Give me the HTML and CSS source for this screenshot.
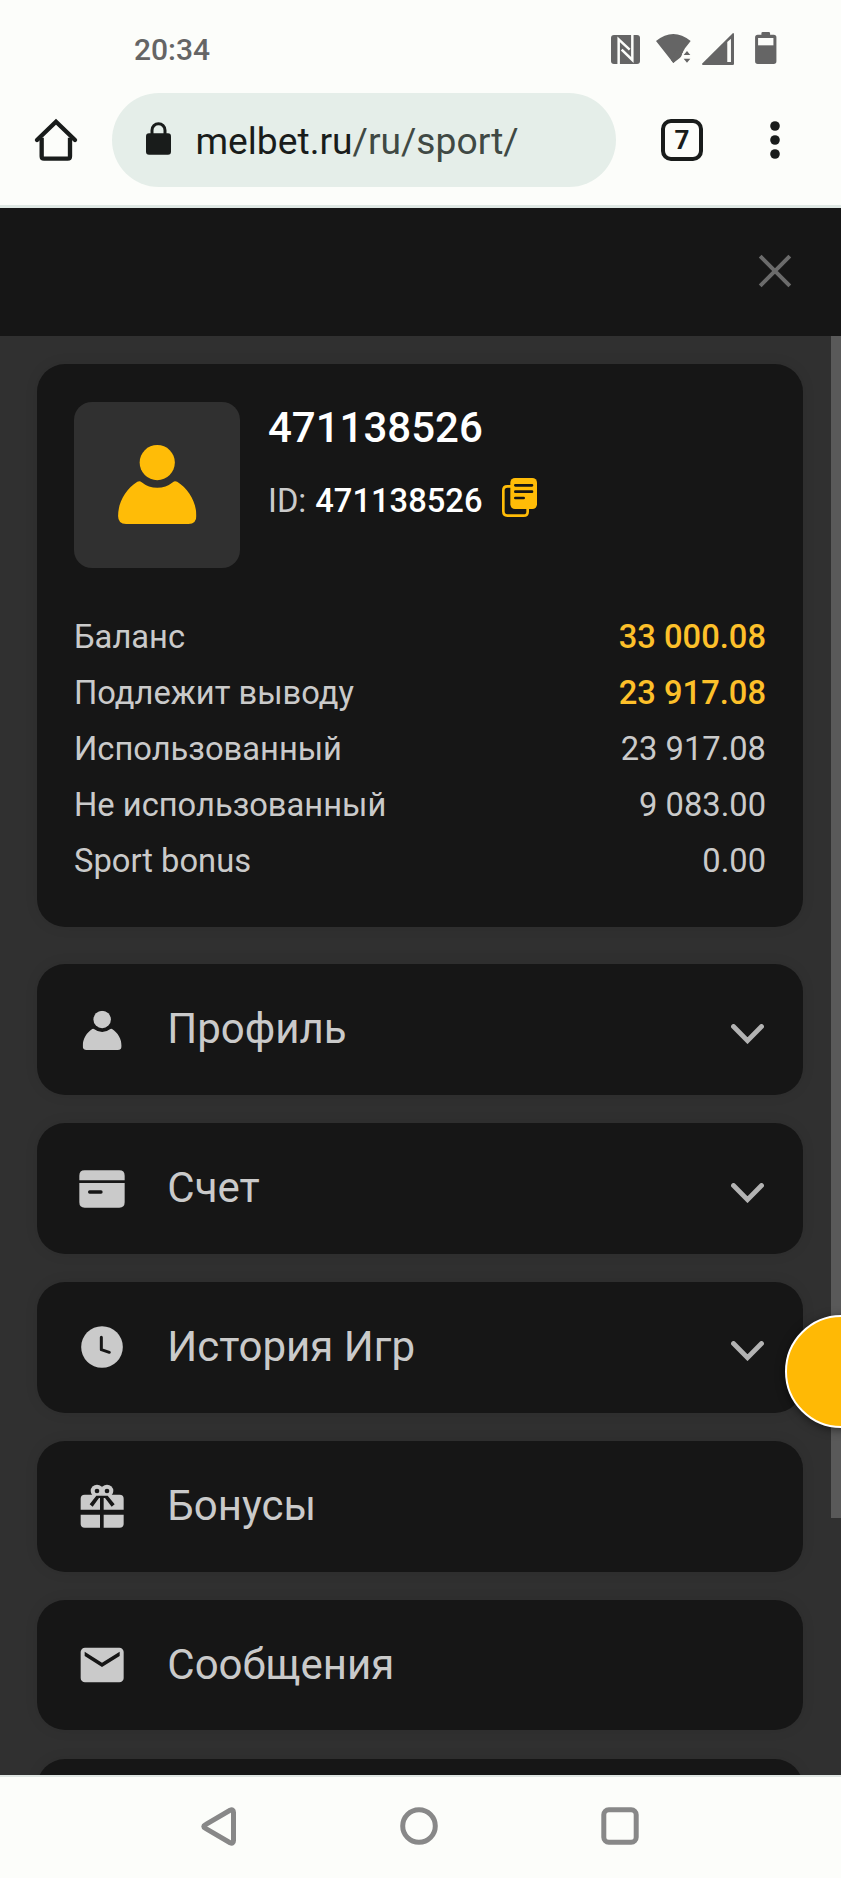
FILE: index.html
```html
<!DOCTYPE html>
<html lang="ru">
<head>
<meta charset="utf-8">
<title>melbet.ru</title>
<link rel="stylesheet" href="styles.css">
</head>
<body>
<svg class="defs" width="0" height="0">
  <symbol id="person" viewBox="0 0 236 238">
    <circle cx="118" cy="53" r="53"/>
    <path d="M58 111Q65 107 71 112Q92 129 118 129T165 112Q171 107 178 111C212 132 236 172 236 214Q236 238 212 238H24Q0 238 0 214C0 172 24 132 58 111Z"/>
  </symbol>
  <symbol id="chevron" viewBox="0 0 33 20">
    <path d="M2.5 2.5L16.5 16.7L30.5 2.5" fill="none" stroke="#b3b3b3" stroke-width="4.8" stroke-linecap="round"/>
  </symbol>
</svg>
<div class="screen">
  <div class="status">
    <span class="time">20:34</span>
    <div class="status-icons">
      <svg class="nfc" viewBox="0 0 87 87"><rect width="87" height="87" rx="9" fill="#656565"/><path d="M23 87V13L56 44M64 0V75L32 44" fill="none" stroke="#fcfdfa" stroke-width="7.5"/></svg>
      <svg class="wifi" viewBox="0 0 105 87"><path d="M0 21Q52 -21 104 21L87 43L79 57V66L52 87Z" fill="#656565"/><path d="M66 87L80 58L89 46L105 46V87Z" fill="#fcfdfa"/><path d="M52 87L80 55V50H60L45 78Z" fill="#656565"/><path d="M83 63L93 51L103 63ZM83 74L93 86L103 74Z" fill="#656565"/></svg>
      <svg class="signal" viewBox="0 0 95 95"><path d="M0 91L92 0Q95 0 95 4V91Q95 95 91 95H3Q0 95 0 91Z" fill="#656565"/><path d="M75 27L86 17V86H75Z" fill="#fcfdfa"/></svg>
      <svg class="battery" viewBox="0 0 64 96"><path d="M19 8V4Q19 0 23 0H41Q45 0 45 4V8H56Q64 8 64 16V88Q64 96 56 96H8Q0 96 0 88V16Q0 8 8 8Z" fill="#656565"/><rect x="9" y="18" width="46" height="22" fill="#fcfdfa"/></svg>
    </div>
  </div>
  <div class="toolbar">
    <svg class="home" viewBox="0 0 126 126" fill="none" stroke="#191c1b" stroke-width="13"><path d="M20 56V112Q20 119 27 119H98Q105 119 105 112V56"/><path d="M6 63L63 8L120 63" stroke-linecap="round" stroke-linejoin="miter"/></svg>
    <div class="address">
      <svg class="lock" viewBox="0 0 75 98"><rect y="33" width="75" height="65" rx="9" fill="#191c1b"/><path d="M18 36V24a19.5 19.5 0 0 1 39 0V36" fill="none" stroke="#191c1b" stroke-width="9"/></svg>
      <span class="url">melbet.ru<span class="path">/ru/sport/</span></span>
    </div>
    <div class="tabs">7</div>
    <svg class="dots" viewBox="0 0 10 38" fill="#191c1b"><circle cx="5" cy="5" r="4.8"/><circle cx="5" cy="19" r="4.8"/><circle cx="5" cy="33" r="4.8"/></svg>
  </div>
  <div class="panel-head">
    <svg class="close" viewBox="0 0 32 32"><path d="M1.2 1.2L30.8 30.8M30.8 1.2L1.2 30.8" stroke="#6b6b6b" stroke-width="4"/></svg>
  </div>
  <main class="content">
    <section class="card account">
      <div class="user">
        <div class="avatar"><svg class="avatar-icon"><use href="#person"/></svg></div>
        <div class="ident">
          <div class="name">471138526</div>
          <div class="id-row"><span class="id-label">ID:</span><span class="id-num">471138526</span>
            <svg class="copy" viewBox="0 0 105 117"><path d="M27 25H16Q4 25 4 37V100Q4 113 16 113H65Q77 113 77 101V90" fill="none" stroke="#ffbc07" stroke-width="8"/><rect x="25" y="0" width="80" height="93" rx="14" fill="#ffbc07"/><path d="M40 22H90M40 41H90M40 60H65" stroke="#161616" stroke-width="8" stroke-linecap="round"/></svg>
          </div>
        </div>
      </div>
      <div class="balances">
        <div class="row"><span>Баланс</span><b>33 000.08</b></div>
        <div class="row"><span>Подлежит выводу</span><b>23 917.08</b></div>
        <div class="row"><span>Использованный</span><span>23 917.08</span></div>
        <div class="row"><span>Не использованный</span><span>9 083.00</span></div>
        <div class="row"><span>Sport bonus</span><span>0.00</span></div>
      </div>
    </section>
    <nav class="menu">
      <div class="card item">
        <svg class="icon" viewBox="0 0 138 138"><use href="#person" x="11" y="11" width="117" height="118"/></svg>
        <span>Профиль</span><svg class="chevron"><use href="#chevron"/></svg>
      </div>
      <div class="card item">
        <svg class="icon" viewBox="0 0 138 138"><path d="M1 43V29Q1 13 17 13H121Q137 13 137 29V43ZM1 51H137V109Q137 125 121 125H17Q1 125 1 109Z"/><path d="M32 78H66" stroke="#161616" stroke-width="10" stroke-linecap="round"/></svg>
        <span>Счет</span><svg class="chevron"><use href="#chevron"/></svg>
      </div>
      <div class="card item">
        <svg class="icon" viewBox="0 0 138 138"><circle cx="69" cy="69" r="62.5"/><path d="M67 40V77L91 85" fill="none" stroke="#161616" stroke-width="9" stroke-linecap="round" stroke-linejoin="round"/></svg>
        <span>История Игр</span><svg class="chevron"><use href="#chevron"/></svg>
      </div>
      <div class="card item">
        <svg class="icon" viewBox="0 0 138 138"><path d="M63 80H5V47Q5 35 17 35H122Q134 35 134 47V80H74V42H63ZM5 95H63V134H17Q5 134 5 122ZM74 95H134V122Q134 134 122 134H74Z"/><circle cx="54" cy="24" r="19"/><circle cx="84" cy="24" r="19"/><g fill="#161616"><circle cx="54" cy="24" r="7"/><circle cx="84" cy="24" r="7"/><path d="M52 38H86L107 64L98 71L78 45H60L41 71L32 64Z"/></g></svg>
        <span>Бонусы</span>
      </div>
      <div class="card item">
        <svg class="icon" viewBox="0 0 138 138"><rect x="5" y="17" width="129" height="104" rx="13"/><path d="M17 29L69 62L122 29V42L69 75L17 42Z" fill="#161616"/></svg>
        <span>Сообщения</span>
      </div>
      <div class="card item"></div>
    </nav>
    <div class="scrollbar"></div>
    <div class="fab"></div>
  </main>
  <div class="sysnav">
    <svg class="back" viewBox="0 0 35 39"><path d="M4.5 17.6L29 3.3Q32.5 1.8 32.5 5.5V33.5Q32.5 37.2 29 35.7L4.5 21.4Q1 19.5 4.5 17.6Z"/></svg>
    <svg class="circle" viewBox="0 0 38 38"><circle cx="19" cy="19" r="16.3"/></svg>
    <svg class="recent" viewBox="0 0 38 38"><rect x="2.8" y="2.8" width="32.4" height="32.4" rx="5"/></svg>
  </div>
</div>
</body>
</html>
```
FILE: styles.css
```css
* { box-sizing: border-box; }
body { margin: 0; font-family: Roboto, "Noto Sans", sans-serif; background: #fcfdfa; }
svg { display: block; flex: none; overflow: visible; }
.defs { position: absolute; }
.screen { width: 841px; height: 1878px; display: flex; flex-direction: column; overflow: hidden; }

.status { height: 93px; flex: none; display: flex; justify-content: space-between; padding: 0 65px 0 134px; }
.time { font-size: 30px; font-weight: 500; line-height: 36px; padding-top: 32px; color: #656565; }
.status-icons { display: flex; align-items: flex-start; padding-top: 32px; }
.nfc { width: 29px; height: 29px; margin: 3px 16px 0 0; }
.wifi { width: 35px; height: 29px; margin: 2px 11px 0 0; }
.signal { width: 32px; height: 32px; margin: 1px 21px 0 0; }
.battery { width: 21.5px; height: 32px; }

.toolbar { height: 115px; flex: none; display: flex; align-items: flex-start; padding-left: 35px; border-bottom: 3px solid #dfe8e4; }
.home { width: 42px; height: 42px; margin: 26px 35px 0 0; }
.address { width: 504px; height: 93.5px; border-radius: 47px; background: #e5eee9; display: flex; align-items: center; padding-left: 34px; }
.lock { width: 25px; height: 33px; margin: 0 24.5px 2px 0; }
.url { font-size: 37.2px; line-height: 44px; padding-top: 3px; color: #191c1b; white-space: nowrap; }
.path { color: #404944; }
.tabs { width: 42px; height: 42px; margin: 26px 66px 0 45px; border: 4px solid #191c1b; border-radius: 10px; font-size: 26px; font-weight: 700; line-height: 35px; text-align: center; color: #191c1b; }
.dots { width: 10px; height: 38px; margin: 28px 0 0 1px; }

.panel-head { height: 128px; flex: none; background: #161616; display: flex; justify-content: flex-end; padding: 46.5px 50px 0 0; }
.close { width: 32px; height: 32px; }

.content { position: relative; flex: 1; min-height: 0; background: #303030; padding: 28px 38px 0 37px; overflow: hidden; color: #cacaca; }
.card { background: #161616; border-radius: 28px; box-shadow: 0 0 14px rgba(0, 0, 0, .08); }
.account { height: 563px; padding: 37.5px 37px 0; }
.user { display: flex; gap: 28px; }
.avatar { width: 166px; height: 166px; border-radius: 18px; background: #303030; padding: 43.5px 0 0 44px; }
.avatar-icon { width: 78.5px; height: 79px; fill: #ffbc07; }
.name { font-size: 42px; font-weight: 500; line-height: 50px; padding-top: 1px; color: #fff; }
.id-row { display: flex; align-items: center; font-size: 32.7px; line-height: 40px; padding-top: 28px; }
.id-label { margin-right: 9px; }
.id-num { font-weight: 500; color: #fff; }
.copy { width: 35px; height: 39px; margin: -6px 0 0 20px; }
.balances { margin-top: 41px; }
.row { height: 56px; display: flex; justify-content: space-between; font-size: 32.7px; line-height: 56px; white-space: nowrap; }
.row b { font-weight: 500; color: #fdc02a; }

.menu { display: flex; flex-direction: column; gap: 28.2px; margin-top: 37.3px; }
.item { height: 130.7px; flex: none; display: flex; align-items: center; padding: 0 39px 0 42.3px; font-size: 42px; line-height: 50px; }
.item span { margin-top: -1px; }
.icon { width: 46px; height: 46px; margin-right: 42px; fill: #cacaca; }
.chevron { width: 33px; height: 20px; margin: 8px 0 0 auto; }

.scrollbar { position: absolute; right: 0; top: 0; width: 10px; height: 1182px; background: #595959; }
.fab { position: absolute; left: 784.5px; top: 978.5px; width: 113px; height: 113px; border-radius: 50%; background: #ffb905; border: 2.5px solid #fff; box-shadow: 0 2px 10px rgba(0, 0, 0, .5); }

.sysnav { height: 103px; flex: none; display: flex; align-items: flex-start; padding: 30px 0 0 201px; border-top: 2px solid #dfe6e3; fill: none; stroke: #888; stroke-width: 5px; }
.back { width: 35px; height: 39px; margin-right: 163.5px; }
.circle { width: 38px; height: 38px; margin-right: 163px; }
.recent { width: 38px; height: 38px; }
```
